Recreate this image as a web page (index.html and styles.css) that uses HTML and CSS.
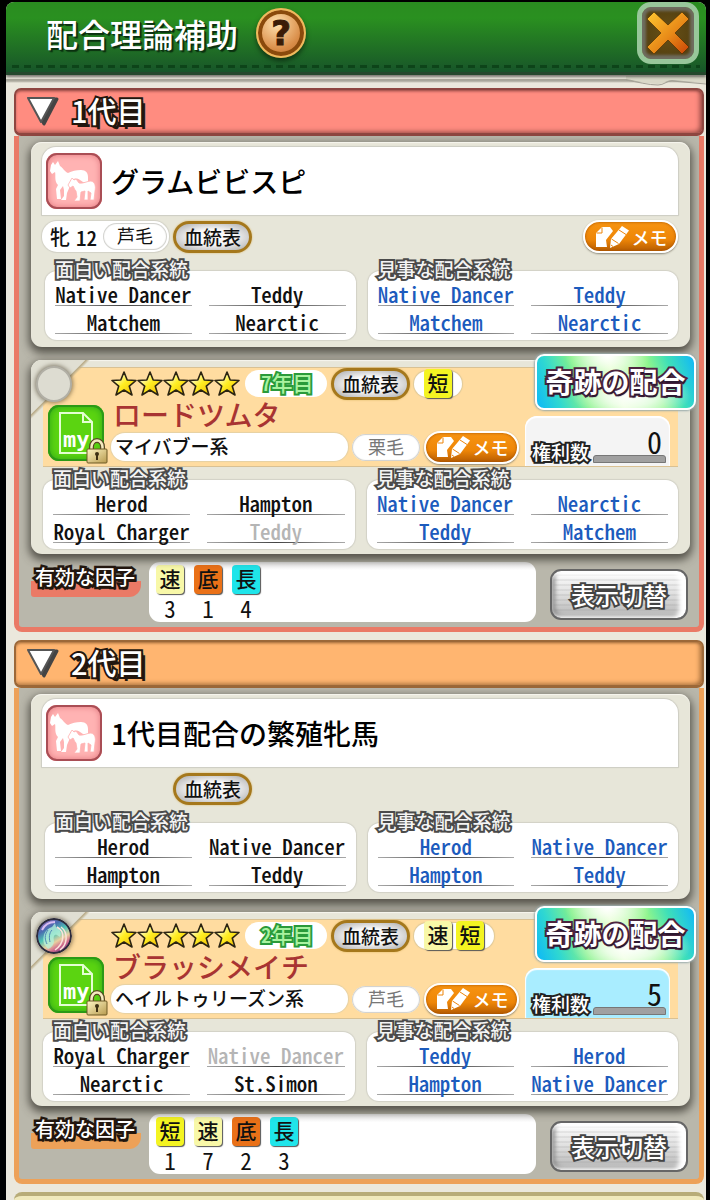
FILE: index.html
```
<!DOCTYPE html>
<html lang="ja">

<head>
  <meta charset="utf-8">
  <meta name="viewport" content="width=device-width, initial-scale=1.0">
  <title>配合理論補助</title>
  <link rel="stylesheet" href="styles.css">
</head>

<body>
  <!-- 共通アイコン -->
  <svg class="defs" width="0" height="0" aria-hidden="true">
    <defs>
      <linearGradient id="g-star" x1="0" y1="0" x2="1" y2="1">
        <stop offset=".2" stop-color="#fffbd0" />
        <stop offset=".5" stop-color="#ffee22" />
        <stop offset="1" stop-color="#f0b400" />
      </linearGradient>
      <linearGradient id="g-cross" x1="0" y1="0" x2="1" y2="1">
        <stop offset="0" stop-color="#ffc832" />
        <stop offset=".55" stop-color="#e88a18" />
        <stop offset="1" stop-color="#c84206" />
      </linearGradient>
      <linearGradient id="g-lock" x1="0" y1="0" x2="1" y2="1">
        <stop offset="0" stop-color="#fff6c4" />
        <stop offset="1" stop-color="#b79a4e" />
      </linearGradient>
      <linearGradient id="g-orb" x1=".2" y1="0" x2=".8" y2="1">
        <stop offset="0" stop-color="#a06cc0" />
        <stop offset=".25" stop-color="#4a6cb0" />
        <stop offset=".45" stop-color="#4fc4b4" />
        <stop offset=".65" stop-color="#e8d0a0" />
        <stop offset=".8" stop-color="#d0688c" />
        <stop offset="1" stop-color="#5a2c84" />
      </linearGradient>
      <symbol id="star" viewBox="0 0 26 26">
        <path d="M13 1 L16.200 9 L25 9.500 L18.300 15.200 L21 24 L13 19 L5 24 L7.700 15.200 L1 9.500 L9.800 9 Z" fill="url(#g-star)" stroke="#2b2412" stroke-width="1.600" stroke-linejoin="round" />
      </symbol>
      <symbol id="mare" viewBox="0 0 56 56">
        <path fill="#fff" d="M4 18 L5 12 L7 9 L9 12 L12 8 L14 13 C17 15 19 19 22 20 C26 18 30 17 35 17 C40 17 42 20 42 24 L42 29 L37 29 L34 27 C31 25 27 25 24 28 L24 33 L21 40 L20 47 L15 47 L18 43 L18 37 L17 33 L14 37 L15 46 L11 46 L10 36 L12 32 C8 28 10 22 9 19 L6 21 Z" />
        <path fill="#fff" stroke="#ffb3b3" stroke-width=".8" d="M22 32 L26 25 L28 27 L30 26 L33 30 C37 31 41 28 45 28 C49 29 50 33 49 38 L48 47 L44 47 L45 40 L42 38 L42 47 L38 47 L39 38 L35 39 L34 48 L28 48 L31 44 L30 38 C28 36 28 34 27 33 L24 35 Z" />
      </symbol>
      <symbol id="memo" viewBox="0 0 36 24">
        <path fill="#fff" d="M2 8 L8 2 H16 L19 6 L12 15 L13 22 H2 Z" />
        <path fill="none" stroke="#ed8408" d="M2.500 8 H8 V2.500" />
        <path fill="#fff" d="M28 1 L35 5.500 L25 19 L16 23 L17 14 Z" />
        <path fill="none" stroke="#ed8408" d="M17.500 14 L24.500 18.500 M25 5 L32 9.500 M17 20 L19 21.500" />
      </symbol>
      <symbol id="my" viewBox="0 0 56 56">
        <path fill="none" stroke="#e4ffd2" stroke-width="2" d="M12 8 H35 L44 17 V48 H12 Z M35 8 V17 H44" />
      </symbol>
      <symbol id="lock" viewBox="0 0 22 26">
        <path fill="none" stroke="#574723" stroke-width="5" d="M5.500 14 V9 A5.500 6.500 0 0 1 16.500 9 V14" />
        <path fill="none" stroke="#f4eac0" stroke-width="2.500" d="M5.500 14 V9 A5.500 6.500 0 0 1 16.500 9 V14" />
        <rect x="1" y="11" width="20" height="14" rx="1" fill="url(#g-lock)" stroke="#6d5924" />
        <circle cx="11" cy="16" r="2" fill="#3d3013" />
        <path d="M10 16 H12 V22 H10 Z" fill="#3d3013" />
      </symbol>
    </defs>
  </svg>

  <div class="app">
    <header class="topbar">
      <h1>配合理論補助</h1>
      <button class="help" type="button" aria-label="ヘルプ">?</button>
      <button class="close" type="button" aria-label="閉じる">
        <svg viewBox="0 0 44 44" width="44" height="44">
          <path fill="url(#g-cross)" stroke="#3f2600" stroke-width=".6" d="M8 1 L22 14 L36 1 L43 8 L29 22 L43 36 L36 43 L22 29 L8 43 L1 36 L15 22 L1 8 Z" />
        </svg>
      </button>
    </header>

    <main>
      <svg class="torn" viewBox="0 0 80 12" width="80" height="12" aria-hidden="true">
        <path d="M0 3 C12 5 22 8 32 8 C38 8 40 4 46 4 L80 7 V0 H0 Z" fill="#d9d8c8" />
        <path d="M0 4 C12 6 22 9 32 9 C38 9 40 5 46 5 L80 8" fill="none" stroke="#a3a196" />
      </svg>

      <!-- 1代目 -->
      <section class="generation gen-red">
        <h2><button type="button" class="gen-title">
            <svg viewBox="0 0 34 32" width="34" height="32">
              <path d="M5 3 H31 L18 28 Z" fill="#444" stroke="#444" stroke-width="3" stroke-linejoin="round" />
              <path d="M2 2 H28 L15 26 Z" fill="#fff" stroke="#555" stroke-width="2" stroke-linejoin="round" />
            </svg>
            <span>1代目</span></button></h2>
        <div class="gen-body">
          <article class="card mare-card">
            <div class="name-box">
              <span class="mare-icon"><svg width="56" height="56"><use href="#mare" /></svg></span>
              <h3>グラムビビスピ</h3>
            </div>
            <div class="meta">
              <div class="sex">牝<span class="half">12</span><span class="coat">芦毛</span></div>
              <button type="button" class="pedigree">血統表</button>
              <button type="button" class="memo"><svg width="36" height="24"><use href="#memo" /></svg>メモ</button>
            </div>
            <div class="lines">
              <section class="line-box">
                <h4>面白い配合系統</h4>
                <ul>
                  <li>Native Dancer</li>
                  <li>Teddy</li>
                  <li>Matchem</li>
                  <li>Nearctic</li>
                </ul>
              </section>
              <section class="line-box great">
                <h4>見事な配合系統</h4>
                <ul>
                  <li>Native Dancer</li>
                  <li>Teddy</li>
                  <li>Matchem</li>
                  <li>Nearctic</li>
                </ul>
              </section>
            </div>
          </article>

          <article class="card sire-card">
            <span class="corner"></span>
            <span class="orb empty"></span>
            <span class="miracle">奇跡の配合</span>
            <div class="sire">
              <span class="my-icon">
                <svg class="sheet" width="56" height="56"><use href="#my" /></svg>
                <b>my</b>
                <svg class="lock" width="22" height="26"><use href="#lock" /></svg>
              </span>
              <div class="sire-main">
                <div class="sire-row">
                  <svg class="stars" width="130" height="26" role="img" aria-label="星5">
                    <use href="#star" x="0" width="26" height="26" />
                    <use href="#star" x="26" width="26" height="26" />
                    <use href="#star" x="52" width="26" height="26" />
                    <use href="#star" x="77" width="26" height="26" />
                    <use href="#star" x="103" width="26" height="26" />
                  </svg>
                  <span class="year"><span class="half">7</span>年目</span>
                  <button type="button" class="pedigree">血統表</button>
                  <span class="traits"><i class="factor f-short">短</i></span>
                </div>
                <h3>ロードツムタ</h3>
                <div class="sire-row low">
                  <span class="family">マイバブー系</span>
                  <span class="coat pale">栗毛</span>
                  <button type="button" class="memo"><svg width="36" height="24"><use href="#memo" /></svg>メモ</button>
                </div>
              </div>
              <div class="rights"><span>権利数</span><output>0</output></div>
            </div>
            <div class="lines">
              <section class="line-box">
                <h4>面白い配合系統</h4>
                <ul>
                  <li>Herod</li>
                  <li>Hampton</li>
                  <li>Royal Charger</li>
                  <li class="off">Teddy</li>
                </ul>
              </section>
              <section class="line-box great">
                <h4>見事な配合系統</h4>
                <ul>
                  <li>Native Dancer</li>
                  <li>Nearctic</li>
                  <li>Teddy</li>
                  <li>Matchem</li>
                </ul>
              </section>
            </div>
          </article>

          <div class="bottom">
            <h4 class="factor-title">有効な因子</h4>
            <ul class="factors">
              <li><i class="factor f-speed">速</i>3</li>
              <li><i class="factor f-power">底</i>1</li>
              <li><i class="factor f-long">長</i>4</li>
            </ul>
            <button type="button" class="switch">表示切替</button>
          </div>
        </div>
      </section>

      <!-- 2代目 -->
      <section class="generation gen-orange">
        <h2><button type="button" class="gen-title">
            <svg viewBox="0 0 34 32" width="34" height="32">
              <path d="M5 3 H31 L18 28 Z" fill="#444" stroke="#444" stroke-width="3" stroke-linejoin="round" />
              <path d="M2 2 H28 L15 26 Z" fill="#fff" stroke="#555" stroke-width="2" stroke-linejoin="round" />
            </svg>
            <span>2代目</span></button></h2>
        <div class="gen-body">
          <article class="card mare-card">
            <div class="name-box">
              <span class="mare-icon"><svg width="56" height="56"><use href="#mare" /></svg></span>
              <h3>1代目配合の繁殖牝馬</h3>
            </div>
            <div class="meta">
              <div class="sex blank"></div>
              <button type="button" class="pedigree">血統表</button>
            </div>
            <div class="lines">
              <section class="line-box">
                <h4>面白い配合系統</h4>
                <ul>
                  <li>Herod</li>
                  <li>Native Dancer</li>
                  <li>Hampton</li>
                  <li>Teddy</li>
                </ul>
              </section>
              <section class="line-box great">
                <h4>見事な配合系統</h4>
                <ul>
                  <li>Herod</li>
                  <li>Native Dancer</li>
                  <li>Hampton</li>
                  <li>Teddy</li>
                </ul>
              </section>
            </div>
          </article>

          <article class="card sire-card">
            <span class="corner"></span>
            <svg class="orb" viewBox="0 0 36 36" width="36" height="36">
              <circle cx="18" cy="18" r="17" fill="url(#g-orb)" stroke="#2c2b3c" stroke-width="2" />
              <path d="M8 26 C6 18 9 11 16 9 L19 5 L20 9 C24 11 26 15 24 19 L21 17 C18 16 17 19 18 23 C18 27 15 30 12 31 Z" fill="#b8f4dc" opacity=".75" />
              <path d="M12 12 C8 17 9 22 11 26 M16 12 C13 15 13 20 14 24" fill="none" stroke="#4f86b4" stroke-width="1" />
              <path d="M21 9 C29 13 29 25 19 32 M25 9 C33 15 31 27 24 32" fill="none" stroke="#fbe3da" stroke-width="1.500" />
              <path d="M6 12 C9 6 14 4 19 4" fill="none" stroke="#d9bdf2" stroke-width="2" />
            </svg>
            <span class="miracle">奇跡の配合</span>
            <div class="sire">
              <span class="my-icon">
                <svg class="sheet" width="56" height="56"><use href="#my" /></svg>
                <b>my</b>
                <svg class="lock" width="22" height="26"><use href="#lock" /></svg>
              </span>
              <div class="sire-main">
                <div class="sire-row">
                  <svg class="stars" width="130" height="26" role="img" aria-label="星5">
                    <use href="#star" x="0" width="26" height="26" />
                    <use href="#star" x="26" width="26" height="26" />
                    <use href="#star" x="52" width="26" height="26" />
                    <use href="#star" x="77" width="26" height="26" />
                    <use href="#star" x="103" width="26" height="26" />
                  </svg>
                  <span class="year"><span class="half">2</span>年目</span>
                  <button type="button" class="pedigree">血統表</button>
                  <span class="traits"><i class="factor f-speed">速</i><i class="factor f-short">短</i></span>
                </div>
                <h3>ブラッシメイチ</h3>
                <div class="sire-row low">
                  <span class="family">ヘイルトゥリーズン系</span>
                  <span class="coat pale">芦毛</span>
                  <button type="button" class="memo"><svg width="36" height="24"><use href="#memo" /></svg>メモ</button>
                </div>
              </div>
              <div class="rights owned"><span>権利数</span><output>5</output></div>
            </div>
            <div class="lines">
              <section class="line-box">
                <h4>面白い配合系統</h4>
                <ul>
                  <li>Royal Charger</li>
                  <li class="off">Native Dancer</li>
                  <li>Nearctic</li>
                  <li>St.Simon</li>
                </ul>
              </section>
              <section class="line-box great">
                <h4>見事な配合系統</h4>
                <ul>
                  <li>Teddy</li>
                  <li>Herod</li>
                  <li>Hampton</li>
                  <li>Native Dancer</li>
                </ul>
              </section>
            </div>
          </article>

          <div class="bottom">
            <h4 class="factor-title">有効な因子</h4>
            <ul class="factors">
              <li><i class="factor f-short">短</i>1</li>
              <li><i class="factor f-speed">速</i>7</li>
              <li><i class="factor f-power">底</i>2</li>
              <li><i class="factor f-long">長</i>3</li>
            </ul>
            <button type="button" class="switch">表示切替</button>
          </div>
        </div>
      </section>

      <div class="next-gen"></div>
    </main>
  </div>
</body>

</html>
```
FILE: styles.css
```
* {
  box-sizing: border-box;
}

body {
  margin: 0;
  padding: 2px 4px 0 6px;
  background: #000;
  color: #111;
  font-family: "Noto Sans CJK JP", sans-serif;
}

h1,
h2,
h3,
h4,
ul {
  margin: 0;
  padding: 0;
  font-weight: normal;
}

ul {
  list-style: none;
}

i {
  font-style: normal;
}

button {
  padding: 0;
  border: none;
  font-family: inherit;
  cursor: pointer;
}

svg {
  display: block;
  flex: none;
}

.defs {
  position: absolute;
}

.app {
  background: #ebe8dc;
  border-radius: 8px 8px 0 0;
}

/* ヘッダー */
.topbar {
  position: relative;
  z-index: 1;
  display: flex;
  align-items: center;
  height: 73px;
  padding: 0 7px 8px 40px;
  background: linear-gradient(#2a8c20 0, #2a9020 16px, #1a5c28 64px, #16552a);
  border-radius: 8px 8px 0 0;
  border-bottom: 3px solid #24482d;
  box-shadow: 0 2px 3px rgba(0, 0, 0, 0.5);
}

/* ステッチ */
.topbar::after {
  content: "";
  position: absolute;
  left: 6px;
  right: 6px;
  bottom: 4px;
  height: 3px;
  background: repeating-linear-gradient(90deg, #0d4419 0 7px, transparent 7px 12px);
}

.topbar h1 {
  font-size: 32px;
  line-height: 40px;
  font-weight: 500;
  color: #fff;
  text-shadow: 2px 2px 1px #0b3010, 1px 1px 0 #0b3010;
}

.help {
  width: 50px;
  height: 50px;
  margin-left: 18px;
  border-radius: 50%;
  border: 2px solid #efb95c;
  background: radial-gradient(circle at 40% 30%, #ffe0ad, #d98d48 60%, #b4662a);
  box-shadow: inset 0 0 0 4px #8a4a0c, 0 3px 5px rgba(0, 0, 0, 0.5);
  color: #3b1c06;
  font: bold 34px/44px "DejaVu Sans", sans-serif;
  -webkit-text-stroke: 1px #3b1c06;
}

.close {
  display: flex;
  align-items: center;
  justify-content: center;
  position: relative;
  z-index: 1;
  width: 62px;
  height: 62px;
  margin-left: auto;
  border: 5px solid #98c79a;
  border-radius: 14px;
  background: radial-gradient(#665018, #4e3a0c);
  box-shadow: inset 0 0 3px 4px #6f6d60;
}

/* 世代ブロック */
main {
  position: relative;
  padding: 13px 2px 0 8px;
  background: linear-gradient(transparent 4px, #a9a79b 4px 6px, transparent 8px);
}

/* 紙のめくれ */
.torn {
  position: absolute;
  top: 1px;
  right: 0;
}

.generation {
  position: relative;
  margin-bottom: 8px;
}

.gen-red {
  --head: #ff8c80;
  --edge: #8e4640;
  --line: #ea7a66;
}

.gen-orange {
  --head: #ffb570;
  --edge: #9c6838;
  --line: #eda158;
}

.gen-title {
  display: flex;
  align-items: center;
  gap: 11px;
  width: 100%;
  height: 48px;
  padding: 0 10px;
  background: var(--head);
  border: 2px solid var(--edge);
  border-bottom-width: 3px;
  border-radius: 7px;
  box-shadow: inset -3px -2px 5px -1px var(--edge), inset 0 2px 3px -1px var(--edge);
}

.gen-title span {
  color: #fff;
  font-size: 29px;
  line-height: 36px;
  padding-bottom: 4px;
  font-weight: 500;
  -webkit-text-stroke: 4px #22160e;
  paint-order: stroke fill;
  text-shadow: 2px 2px 0 #22160e, 4px 4px 0 #22160e;
}

.gen-body {
  padding: 6px 9px 5px 12px;
  border: solid var(--line);
  border-width: 0 5px 5px;
  border-radius: 0 0 8px 8px;
  background: #b9b7ab;
}

.card {
  position: relative;
  background: #e7e6d9;
  border-radius: 11px;
  box-shadow: 0 4px 8px 2px rgba(60, 58, 50, 0.8), inset 0 1px 1px #f7f6ee;
}

.mare-card {
  padding: 5px 12px 7px 11px;
  margin-bottom: 13px;
}

.sire-card {
  padding: 7px 12px 5px;
  margin-bottom: 8px;
}

.name-box {
  display: flex;
  align-items: center;
  gap: 9px;
  height: 68px;
  padding: 0 4px;
  background: #fff;
  border-radius: 14px 14px 0 0;
  box-shadow: 0 0 1px 1px #cdccc2;
}

.name-box h3 {
  font-size: 28px;
  line-height: 40px;
  font-weight: 500;
  color: #000;
}

.mare-icon {
  width: 56px;
  height: 56px;
  border-radius: 11px;
  background: #ffb3b3;
  box-shadow: inset 0 0 0 2px #a94e55, inset 0 0 6px 2px #e47a80;
}

.meta {
  display: flex;
  align-items: center;
  gap: 4px;
  height: 33px;
  margin-top: 5px;
}

.half {
  font-feature-settings: "hwid";
}

.sex {
  display: flex;
  align-items: center;
  justify-content: flex-end;
  gap: 6px;
  width: 127px;
  height: 31px;
  padding-right: 2px;
  background: #fff;
  border-radius: 15px;
  box-shadow: 0 0 1px 1px #d2d1c6;
  font-size: 20px;
  font-weight: 500;
}

.sex .half {
  font-size: 21px;
}

.sex.blank {
  background: none;
  box-shadow: none;
}

.coat {
  width: 64px;
  height: 27px;
  border-radius: 14px;
  background: #fff;
  box-shadow: inset 0 0 1px 1px #cfcfcb;
  font-size: 18px;
  line-height: 25px;
  font-weight: normal;
  text-align: center;
}

.coat.pale {
  width: 68px;
  color: #777;
}

.pedigree {
  width: 79px;
  height: 32px;
  border: 3px solid #a5781c;
  border-radius: 16px;
  background: radial-gradient(#f8f8f8 40%, #a9a9a9);
  box-shadow: 0 0 2px #d9b25a;
  color: #111;
  font-size: 19px;
  line-height: 24px;
  font-weight: 500;
}

.memo {
  display: flex;
  align-items: center;
  justify-content: center;
  gap: 2px;
  width: 95px;
  height: 33px;
  margin-left: auto;
  border: 2px solid #fff;
  border-radius: 17px;
  background: linear-gradient(#f79412, #ee8607 60%, #b65c02);
  box-shadow: 0 1px 2px #8a8676, inset 0 0 3px #a34f00;
  color: #fff;
  font-size: 18px;
  line-height: 28px;
  font-weight: 500;
}

/* 配合系統 */
.lines {
  display: flex;
  gap: 12px;
}

.mare-card .lines {
  margin-top: 18px;
  padding-left: 3px;
}

.sire-card .lines {
  margin-top: 13px;
}

.line-box {
  flex: 1;
  padding: 0 10px 6px;
  background: #fff;
  border-radius: 12px;
  box-shadow: 0 0 1px 1px #d2d1c6;
}

.line-box h4 {
  height: 17px;
  margin-top: -10px;
  color: #f4f4f4;
  font-size: 19px;
  line-height: 16px;
  font-weight: 500;
  white-space: nowrap;
  -webkit-text-stroke: 4px #4b4b4b;
  paint-order: stroke fill;
  text-shadow: 0 1px 1px #4b4b4b;
}

.line-box ul {
  display: grid;
  grid-template-columns: 1fr 1fr;
  column-gap: 17px;
}

.line-box li {
  height: 28px;
  border-bottom: 1px solid;
  border-image: linear-gradient(90deg, #aaa, #444 50%, #aaa) 1;
  font-size: 21px;
  line-height: 33px;
  font-weight: 500;
  font-feature-settings: "hwid";
  text-align: center;
  white-space: nowrap;
}

.great li {
  color: #1c5bbd;
}

.line-box .off {
  color: #b5b5b5;
}

/* 種牡馬 */
.sire {
  display: flex;
  height: 100px;
  padding: 0 8px 0 5px;
  background: #ffdca0;
  border: solid #d9c193;
  border-width: 1px 0;
}

.corner {
  position: absolute;
  top: 0;
  left: 0;
  width: 60px;
  height: 60px;
  border-radius: 11px 0 0 0;
  background: linear-gradient(135deg, #e0dfd3 38px, #b7a985 39px, transparent 42px);
}

.orb {
  position: absolute;
  top: 6px;
  left: 5px;
  width: 36px;
  height: 36px;
  border-radius: 50%;
  box-shadow: 0 0 4px 1px rgba(70, 60, 40, 0.6);
}

.orb.empty {
  background: #dddcd1;
  border: 2px solid #b1afa5;
}

.miracle {
  position: absolute;
  top: -6px;
  right: -6px;
  width: 161px;
  height: 56px;
  border: 2px solid #fff;
  border-radius: 9px;
  background:
    radial-gradient(ellipse at 60% 75%, #fff 0, rgba(255, 255, 255, 0.7) 20%, transparent 45%),
    radial-gradient(ellipse at 45% 0, #fff 0, transparent 35%),
    linear-gradient(70deg, #0cb8f8 0, #30d8d0 14%, #86f28a 30%, #dcffc0 50%, #8ff58c 72%, #3fe0b8 84%, #10b8f8 100%);
  box-shadow: 0 0 2px 1px #9aa;
  color: #fff;
  font-size: 28px;
  line-height: 50px;
  font-weight: bold;
  text-align: center;
  -webkit-text-stroke: 4px #4c2440;
  paint-order: stroke fill;
  text-shadow: 1px 2px 1px #2c1830;
}

.my-icon {
  position: relative;
  width: 56px;
  height: 56px;
  margin-top: 37px;
  border-radius: 11px;
  background: #5bd411;
  box-shadow: inset 0 0 0 2px #2b9a16, inset 0 0 7px 2px #30a818;
}

.my-icon b {
  position: absolute;
  left: 15px;
  top: 22px;
  color: #fff;
  font: bold 22px/26px "DejaVu Sans Mono", monospace;
}

.my-icon .lock {
  position: absolute;
  right: -4px;
  bottom: -3px;
}

.sire-main {
  flex: 1;
  padding-left: 7px;
}

.sire-row {
  display: flex;
  align-items: center;
  gap: 4px;
  height: 31px;
}

.sire-row.low {
  height: 34px;
}

.sire-main h3 {
  padding-left: 2px;
  color: #a83432;
  font-size: 28px;
  line-height: 31px;
  font-weight: 500;
}

.year {
  width: 82px;
  height: 27px;
  padding-left: 16px;
  border-radius: 14px;
  background: #fff;
  color: #a9f2a0;
  font-size: 21px;
  line-height: 25px;
  font-weight: 500;
  -webkit-text-stroke: 4px #2a9a3a;
  paint-order: stroke fill;
}

.traits {
  display: flex;
  align-items: center;
  gap: 4px;
  height: 26px;
  padding: 0 10px;
  border-radius: 13px;
  background: #fff;
  box-shadow: 0 0 1px 1px #dfc998;
}

.family {
  flex: 1;
  height: 28px;
  padding-left: 4px;
  border-radius: 14px;
  background: #fff;
  box-shadow: 0 0 1px 1px #e6d1a4;
  font-size: 19px;
  line-height: 26px;
  font-weight: 500;
}

.rights {
  display: flex;
  align-items: flex-end;
  align-self: flex-end;
  width: 145px;
  height: 50px;
  margin-left: 6px;
  padding: 0 4px 0 7px;
  border-radius: 12px 12px 0 0;
  background: #f4f4f4;
  box-shadow: inset 0 1px 1px 1px #fff;
}

.rights.owned {
  background: #a9edff;
}

.rights span {
  flex: none;
  color: #fff;
  font-size: 19px;
  line-height: 29px;
  font-weight: 500;
  -webkit-text-stroke: 4px #222;
  paint-order: stroke fill;
}

.rights output {
  position: relative;
  flex: 1;
  margin: 0 0 8px 4px;
  padding-right: 4px;
  font-size: 30px;
  line-height: 34px;
  font-feature-settings: "hwid";
  text-align: right;
}

.rights output::after {
  content: "";
  position: absolute;
  left: 0;
  right: 0;
  bottom: -5px;
  height: 6px;
  border: 1px solid #777;
  border-radius: 3px 3px 0 0;
  background: #a0a0a0;
}

/* 因子 */
.factor {
  display: block;
  width: 28px;
  height: 29px;
  border-radius: 4px;
  box-shadow: 1px 1px 1px #555;
  font-size: 21px;
  line-height: 27px;
  font-weight: 500;
  text-align: center;
}

.f-short {
  background: #f4f422;
}

.f-speed {
  background: #f8f8a8;
}

.f-power {
  background: #ea7118;
}

.f-long {
  background: #1fe5ea;
}

.bottom {
  display: flex;
  align-items: center;
  height: 60px;
}

.factor-title {
  align-self: flex-start;
  width: 110px;
  height: 35px;
  padding-left: 4px;
  background: linear-gradient(transparent 19px, var(--line) 19px);
  border-radius: 0 0 12px 3px;
  color: #fff;
  font-size: 20px;
  line-height: 30px;
  font-weight: 500;
  -webkit-text-stroke: 5px #22160e;
  paint-order: stroke fill;
  text-shadow: 2px 3px 0 #22160e;
}

.factors {
  display: flex;
  flex: 1;
  gap: 10px;
  height: 60px;
  margin: 0 14px 0 8px;
  padding: 3px 7px;
  border-radius: 11px;
  background: linear-gradient(#e8e8e8, #fff 8px);
}

.factors li {
  width: 28px;
  font-size: 23px;
  line-height: 28px;
  font-feature-settings: "hwid";
  text-align: center;
}

.switch {
  width: 138px;
  height: 51px;
  margin: 5px 2px 0 0;
  border: 2px solid #666;
  border-radius: 11px;
  background:
    repeating-linear-gradient(transparent 0 3px, rgba(120, 120, 120, 0.12) 3px 5px),
    linear-gradient(#fff 0, #e2e2e2 45%, #b5b5b5);
  box-shadow: inset -4px 1px 4px 3px #fff, inset 3px -2px 4px #888;
  color: #fff;
  font-size: 24px;
  line-height: 44px;
  font-weight: 500;
  -webkit-text-stroke: 4px #444;
  paint-order: stroke fill;
  text-shadow: 1px 1px 1px #444;
}

/* 次の世代の見出し */
.next-gen {
  height: 8px;
  border-top: 4px solid #b8ac78;
  border-radius: 8px 8px 0 0;
  background: #f0e9bc;
}
```
